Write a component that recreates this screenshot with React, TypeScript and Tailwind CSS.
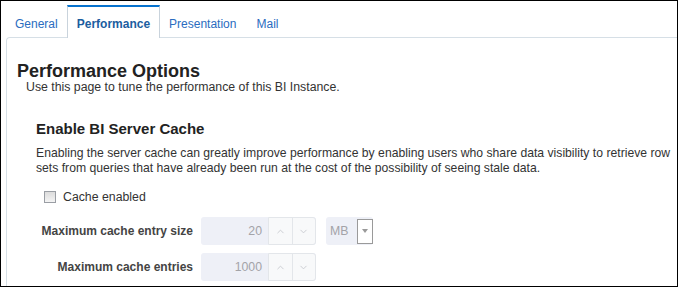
import { ChevronDown, ChevronUp } from "lucide-react"

const tabs = [
  { label: "General", pad: "pl-[10px] pr-[9px]" },
  { label: "Performance", pad: "px-[9px]" },
  { label: "Presentation", pad: "pl-[9px] pr-[10px]" },
  { label: "Mail", pad: "px-[10px]" },
]

function Spinner({ value }: { value: string }) {
  return (
    <div className="flex h-[28px] w-[115px] rounded-[3px] bg-[#eef0f7]">
      <div className="flex flex-1 items-center justify-end pr-[6px] text-[12.3px] text-[#a3a3a8]">{value}</div>
      <div className="flex h-full w-[48px] rounded-r-[3px] border border-[#e3e6ea] bg-[#f8f9fa]">
        <div className="flex flex-1 items-center justify-center border-r border-[#e3e6ea]">
          <ChevronUp className="h-[11px] w-[11px] text-[#c8cbd0]" strokeWidth={2} />
        </div>
        <div className="flex flex-1 items-center justify-center">
          <ChevronDown className="h-[11px] w-[11px] text-[#c8cbd0]" strokeWidth={2} />
        </div>
      </div>
    </div>
  )
}

export default function App() {
  return (
    <div
      className="flex h-[287px] w-[678px] flex-col overflow-hidden border border-black bg-white text-[#333333]"
      style={{ fontFamily: '"Liberation Sans", Arial, sans-serif' }}
    >
      {/* Tabs */}
      <div className="relative z-10 flex pl-[4px] pt-[4px]">
        {tabs.map((tab) => {
          const active = tab.label === "Performance"
          return (
            <div
              key={tab.label}
              className={
                active
                  ? `-mb-px h-[33px] border-x border-t-2 border-x-[#c9d3dc] border-t-[#0572ce] bg-white pt-[10px] text-[12px] font-bold leading-[14px] text-[#1b5d9f] ${tab.pad}`
                  : `h-[32px] pt-[12px] text-[12px] leading-[14px] text-[#2a6cc0] ${tab.pad}`
              }
            >
              {tab.label}
            </div>
          )
        })}
      </div>

      {/* Panel */}
      <div className="ml-[5px] flex-1 rounded-tl-[4px] border-l border-t border-[#d6dfe6] pl-[10px] pt-[24px]">
        <h1 className="text-[18px] font-bold leading-[18px] text-[#222222]">Performance Options</h1>
        <p className="ml-[9px] text-[12.3px] leading-[14px]">Use this page to tune the performance of this BI Instance.</p>

        <div className="pl-[19px]">
          <h2 className="mt-[26px] text-[15px] font-bold leading-[18px] text-[#222222]">Enable BI Server Cache</h2>
          <p className="mt-[8px] w-[645px] text-[12.2px] leading-[15px]">
            Enabling the server cache can greatly improve performance by enabling users who share data visibility to
            retrieve row sets from queries that have already been run at the cost of the possibility of seeing stale
            data.
          </p>

          <div className="mt-[14px] flex h-[14px] items-center pl-[8px] text-[12.3px] leading-[14px]">
            <span className="h-[12px] w-[12px] border border-[#9a9ea4] bg-gradient-to-b from-[#dcdcdc] to-[#f4f4f4]" />
            <span className="ml-[7px]">Cache enabled</span>
          </div>

          <div className="mt-[13px] flex items-center gap-[8px]">
            <div className="w-[157px] text-right text-[12px] font-bold text-[#444444]">Maximum cache entry size</div>
            <Spinner value="20" />
            <div className="ml-[2px] flex h-[28px] w-[47px] items-center rounded-[3px] bg-[#eef0f7]">
              <span className="ml-[4px] flex-1 text-[12.3px] text-[#a3a3a8]">MB</span>
              <div className="flex h-[25px] w-[16px] items-center justify-center border border-[#9a9a9a] bg-white">
                <span className="h-0 w-0 border-x-[3.5px] border-t-[4px] border-x-transparent border-t-[#9a9a9a]" />
              </div>
            </div>
          </div>

          <div className="mt-[8px] flex items-center gap-[8px]">
            <div className="w-[157px] text-right text-[12px] font-bold text-[#444444]">Maximum cache entries</div>
            <Spinner value="1000" />
          </div>
        </div>
      </div>
    </div>
  )
}
